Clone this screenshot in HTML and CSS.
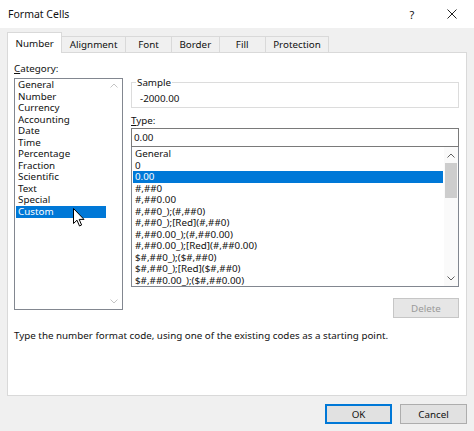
FILE: index.html
```html
<!DOCTYPE html>
<html>
<head>
<meta charset="utf-8">
<link rel="stylesheet" href="styles.css">
</head>
<body>
<div class="titlebar">
  <span class="title">Format Cells</span>
  <span class="help">?</span>
  <span class="close"><svg width="10" height="10" viewBox="0 0 10 10"><path d="M0.5 0.5 L9.5 9.5 M9.5 0.5 L0.5 9.5" stroke="#222" stroke-width="1" fill="none"/></svg></span>
</div>
<div class="tabs">
  <div class="tab active">Number</div>
  <div class="tab">Alignment</div>
  <div class="tab">Font</div>
  <div class="tab">Border</div>
  <div class="tab">Fill</div>
  <div class="tab">Protection</div>
</div>
<div class="panel">
  <div class="cols">
    <div class="col-left">
      <div class="label"><u>C</u>ategory:</div>
      <div class="cat-list">
        <ul class="cat-items">
          <li>General</li>
          <li>Number</li>
          <li>Currency</li>
          <li>Accounting</li>
          <li>Date</li>
          <li>Time</li>
          <li>Percentage</li>
          <li>Fraction</li>
          <li>Scientific</li>
          <li>Text</li>
          <li>Special</li>
          <li class="sel">Custom</li>
        </ul>
        <div class="cat-scroll">
          <svg class="chev" width="8" height="5" viewBox="0 0 8 5"><polyline points="0.5,4.5 4,1 7.5,4.5" fill="none" stroke="#c4c4c4" stroke-width="1"/></svg>
          <svg class="chev" width="8" height="5" viewBox="0 0 8 5"><polyline points="0.5,0.5 4,4 7.5,0.5" fill="none" stroke="#c4c4c4" stroke-width="1"/></svg>
        </div>
      </div>
    </div>
    <div class="col-right">
      <fieldset class="sample">
        <legend>Sample</legend>
        <div class="sample-val">-2000.00</div>
      </fieldset>
      <div class="label type-label"><u>T</u>ype:</div>
      <div class="type-input">0.00</div>
      <div class="type-list">
        <ul class="type-items">
          <li>General</li>
          <li>0</li>
          <li class="sel">0.00</li>
          <li>#,##0</li>
          <li>#,##0.00</li>
          <li>#,##0_);(#,##0)</li>
          <li>#,##0_);[Red](#,##0)</li>
          <li>#,##0.00_);(#,##0.00)</li>
          <li>#,##0.00_);[Red](#,##0.00)</li>
          <li>$#,##0_);($#,##0)</li>
          <li>$#,##0_);[Red]($#,##0)</li>
          <li>$#,##0.00_);($#,##0.00)</li>
        </ul>
        <div class="vscroll">
          <div class="arrow-box"><svg width="8" height="5" viewBox="0 0 8 5"><polyline points="0.5,4.5 4,1 7.5,4.5" fill="none" stroke="#606060" stroke-width="1"/></svg></div>
          <div class="thumb"></div>
          <div class="track"></div>
          <div class="arrow-box"><svg width="8" height="5" viewBox="0 0 8 5"><polyline points="0.5,0.5 4,4 7.5,0.5" fill="none" stroke="#606060" stroke-width="1"/></svg></div>
        </div>
      </div>
      <div class="btn-row"><button class="btn disabled">Delete</button></div>
    </div>
  </div>
  <p class="hint">Type the number format code, using one of the existing codes as a starting point.</p>
</div>
<div class="footer">
  <button class="btn ok">OK</button>
  <button class="btn">Cancel</button>
</div>
<svg class="cursor" width="13" height="20" viewBox="0 0 13 20"><path d="M0.5 0.5 L0.5 15.5 L4 12.2 L6.5 18 L8.6 17 L6.2 11.4 L11 11.4 Z" fill="#fff" stroke="#000" stroke-width="1" stroke-linejoin="round"/></svg>
</body>
</html>
```
FILE: styles.css
```css
* { box-sizing: border-box; }
html, body { margin: 0; padding: 0; }
body {
  width: 474px;
  height: 431px;
  overflow: hidden;
  position: relative;
  background: #f0f0f0;
  font-family: "Noto Sans", "Open Sans", sans-serif;
  font-size: 9.8px;
  color: #111;
}
.titlebar {
  height: 28px;
  background: #fff;
  display: flex;
  align-items: center;
  padding-left: 8px;
}
.title { flex: 1; font-size: 10.5px; }
.help { width: 20px; text-align: center; margin-right: 20px; font-size: 11px; }
.close { width: 20px; margin-right: 12px; display: flex; justify-content: center; }
.close svg { display: block; }

.tabs {
  display: flex;
  align-items: flex-end;
  height: 24px;
  padding-left: 7px;
}
.tab {
  min-width: 47px;
  height: 16px;
  padding: 0 7.5px;
  border: 1px solid #d9d9d9;
  border-bottom: none;
  margin-left: -1px;
  text-align: center;
  line-height: 16px;
  background: #f0f0f0;
}
.tab.active {
  margin-left: 0;
  height: 21px;
  padding-top: 3px;
  background: #fff;
  margin-bottom: -1px;
  position: relative;
  z-index: 1;
}

.panel {
  margin: 0 7px 0 7px;
  height: 344px;
  background: #fff;
  border: 1px solid #d9d9d9;
  padding: 9px 7px 0 6px;
}
.cols { display: flex; gap: 8px; }
.col-left { width: 109px; }
.col-right { flex: 1; padding-top: 14px; display: flex; flex-direction: column; }
.label { line-height: 13px; }

.cat-list {
  margin-top: 3px;
  height: 232px;
  border: 1px solid #828790;
  display: flex;
}
ul { list-style: none; margin: 0; }
.cat-items { width: 91px; padding: 0 0 0 1px; }
.cat-items li, .type-items li {
  line-height: 11.55px;
  height: 11.55px;
  padding-left: 2px;
  white-space: nowrap;
}
li.sel { background: #0078d7; color: #fff; }
.cat-scroll {
  flex: 1;
  display: flex;
  flex-direction: column;
  justify-content: space-between;
  align-items: center;
  padding: 4px 0 5px;
}
.chev, .arrow-box svg { display: block; }

.sample {
  margin: 0;
  min-width: 0;
  border: 1px solid #dcdcdc;
  padding: 3px 8px 2px;
}
.sample legend {
  padding: 0 1px;
  margin-left: -4px;
  line-height: 13px;
}
.sample-val { line-height: 13px; }
.type-label { margin-top: 6px; }
.type-input {
  margin-top: 1px;
  height: 19px;
  border: 1px solid #7a7a7a;
  padding-left: 2px;
  line-height: 17px;
}
.type-list {
  height: 140px;
  border: 1px solid #828790;
  border-top: none;
  display: flex;
}
.type-items {
  width: 312px;
  padding: 1px 1px 0;
  overflow: hidden;
}
.vscroll {
  flex: 1;
  display: flex;
  flex-direction: column;
  background: #fafafa;
}
.arrow-box { height: 16px; display: flex; align-items: center; justify-content: center; }
.thumb { height: 35px; background: #cdcdcd; margin: 0 1px; }
.track { flex: 1; }

.btn-row { display: flex; justify-content: flex-end; margin-top: 11px; }
.btn {
  font-family: inherit;
  font-size: inherit;
  color: #111;
  width: 67px;
  height: 20px;
  padding: 0;
  background: #e1e1e1;
  border: 1px solid #adadad;
  border-radius: 0;
}
.btn.disabled { width: 66px; color: #9a9a9a; border-color: #c6c6c6; background: #e6e6e6; }
.btn.ok { border: 2px solid #0078d7; }

.hint { margin: 11px 0 0; line-height: 13px; }

.footer {
  display: flex;
  justify-content: flex-end;
  gap: 8px;
  padding: 8px 7px 0 0;
}
.cursor { position: absolute; left: 73px; top: 208px; }
```
